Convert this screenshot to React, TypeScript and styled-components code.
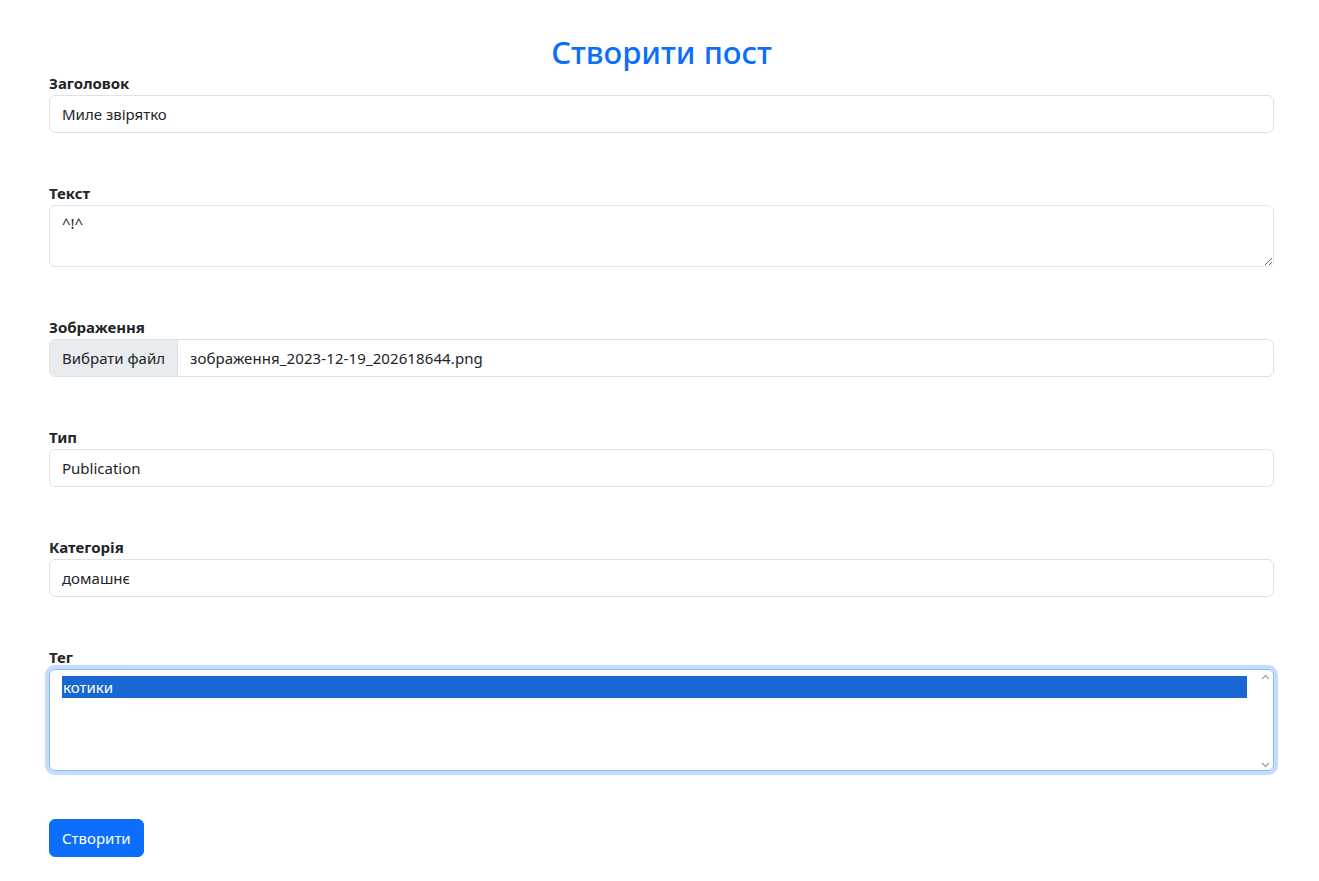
import { type FC } from "react";
import styled, { createGlobalStyle } from "styled-components";

const GlobalStyle = createGlobalStyle`
  * { box-sizing: border-box; }
  body {
    margin: 0;
    background: #fff;
    color: #212529;
    font-family: "Noto Sans", "Open Sans", sans-serif;
    font-size: 16px;
    line-height: 1.5;
  }
`;

const Page = styled.div`
  width: 1225px;
  margin-left: 49px;
  padding-top: 34px;
`;

const Title = styled.h2`
  margin: 0;
  text-align: center;
  color: #0d6efd;
  font-size: 31px;
  font-weight: 500;
  line-height: 37px;
`;

const Form = styled.form`
  display: flex;
  flex-direction: column;
  gap: 48px;
`;

const Field = styled.div`
  display: flex;
  flex-direction: column;
`;

const Label = styled.label`
  font-weight: 700;
  font-size: 15px;
  line-height: 24px;
  color: #212529;
`;

const Input = styled.input`
  height: 38px;
  padding: 6px 12px;
  border: 1px solid #dee2e6;
  border-radius: 6px;
  font: inherit;
  font-size: 15px;
  color: #212529;
  outline: none;
`;

const TextArea = styled.textarea`
  height: 62px;
  padding: 6px 12px;
  border: 1px solid #dee2e6;
  border-radius: 6px;
  font: inherit;
  font-size: 15px;
  color: #212529;
  outline: none;
  resize: vertical;
`;

const FileBox = styled.div`
  display: flex;
  height: 38px;
  border: 1px solid #dee2e6;
  border-radius: 6px;
  overflow: hidden;
  font-size: 15px;
`;

const FileButton = styled.span`
  display: flex;
  align-items: center;
  padding: 0 12px;
  background: #e9ecef;
  border-right: 1px solid #dee2e6;
`;

const FileName = styled.span`
  display: flex;
  align-items: center;
  padding: 0 12px;
  letter-spacing: 0.1px;
`;

const SelectBox = styled.div`
  display: flex;
  height: 102px;
  border: 1px solid #86b7fe;
  border-radius: 6px;
  box-shadow: 0 0 0 4px rgba(13, 110, 253, 0.25);
  padding: 6px 0 6px 12px;
  font-size: 15px;
`;

const OptionList = styled.div`
  flex: 1;
  margin-right: 10px;
`;

const Option = styled.div<{ $selected?: boolean }>`
  height: 22px;
  line-height: 22px;
  padding-left: 1px;
  background: ${(p) => (p.$selected ? "#1967d2" : "transparent")};
  color: ${(p) => (p.$selected ? "#fff" : "#212529")};
`;

const ScrollTrack = styled.div`
  width: 16px;
  display: flex;
  flex-direction: column;
  justify-content: space-between;
  align-items: center;
  margin-top: -2px;
  margin-bottom: -4px;
`;

const Submit = styled.button`
  align-self: flex-start;
  height: 38px;
  padding: 6px 12px;
  border: 1px solid #0d6efd;
  border-radius: 6px;
  background: #0d6efd;
  color: #fff;
  font: inherit;
  font-size: 15px;
`;

const Arrow: FC<{ up?: boolean }> = ({ up }) => (
  <svg width="9" height="6" viewBox="0 0 9 6">
    <path
      d={up ? "M1 5 L4.5 1.5 L8 5" : "M1 1 L4.5 4.5 L8 1"}
      fill="none"
      stroke="#a3a3a3"
      strokeWidth="1.3"
    />
  </svg>
);

export default function App() {
  return (
    <>
      <GlobalStyle />
      <Page>
        <Title>Створити пост</Title>
        <Form onSubmit={(e) => e.preventDefault()}>
          <Field>
            <Label>Заголовок</Label>
            <Input readOnly value="Миле звірятко" />
          </Field>
          <Field>
            <Label>Текст</Label>
            <TextArea readOnly value="^!^" />
          </Field>
          <Field>
            <Label>Зображення</Label>
            <FileBox>
              <FileButton>Вибрати файл</FileButton>
              <FileName>зображення_2023-12-19_202618644.png</FileName>
            </FileBox>
          </Field>
          <Field>
            <Label>Тип</Label>
            <Input readOnly value="Publication" />
          </Field>
          <Field>
            <Label>Категорія</Label>
            <Input readOnly value="домашнє" />
          </Field>
          <Field>
            <Label>Тег</Label>
            <SelectBox>
              <OptionList>
                <Option $selected>котики</Option>
              </OptionList>
              <ScrollTrack>
                <Arrow up />
                <Arrow />
              </ScrollTrack>
            </SelectBox>
          </Field>
          <Submit type="submit">Створити</Submit>
        </Form>
      </Page>
    </>
  );
}
